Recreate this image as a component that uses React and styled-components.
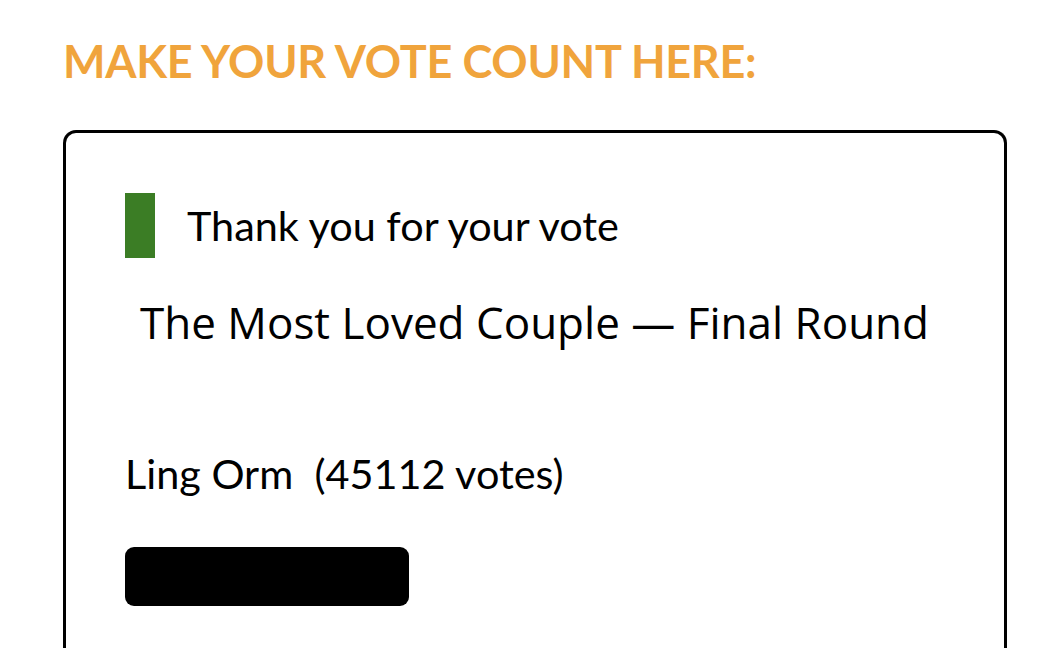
import React from "react";
import styled, { createGlobalStyle } from "styled-components";

const Global = createGlobalStyle`
  html, body {
    margin: 0;
    padding: 0;
    background: #ffffff;
    overflow: hidden;
  }
  body {
    font-family: Lato, "Liberation Sans", sans-serif;
  }
`;

const Page = styled.div`
  width: 1059px;
  height: 648px;
  padding: 34px 52px 0 63px;
  box-sizing: border-box;
  overflow: hidden;
`;

const Heading = styled.h2`
  margin: 0 0 42px 0;
  font-family: Lato, sans-serif;
  font-weight: 700;
  font-size: 45px;
  line-height: 54px;
  color: #f0a43c;
  letter-spacing: -0.3px;
`;

const Card = styled.div`
  border: 3px solid #000;
  border-bottom: none;
  border-radius: 13px 13px 0 0;
  height: 600px;
  padding: 60px 0 0 59px;
  box-sizing: border-box;
`;

const Notice = styled.div`
  display: flex;
  align-items: center;
  gap: 32px;
`;

const NoticeBar = styled.div`
  width: 30px;
  height: 65px;
  background: #3b7d25;
`;

const NoticeText = styled.span`
  font-family: Lato, sans-serif;
  font-size: 41.4px;
  line-height: 49px;
  color: #000;
`;

const PollTitle = styled.div`
  margin: 34px 0 0 15px;
  font-family: "Open Sans", sans-serif;
  font-size: 44px;
  line-height: 60px;
  color: #000;
`;

const Option = styled.div`
  margin-top: 97px;
`;

const OptionLabel = styled.div`
  font-family: Lato, sans-serif;
  font-size: 41.4px;
  line-height: 48px;
  color: #000;
  white-space: pre;
`;

const Bar = styled.div`
  margin-top: 50px;
  height: 59px;
  background: #000;
  border-radius: 9px;
`;

const options = [{ name: "Ling Orm", votes: 45112, width: 284 }];

export default function App() {
  return (
    <Page>
      <Global />
      <Heading>MAKE YOUR VOTE COUNT HERE:</Heading>
      <Card>
        <Notice>
          <NoticeBar />
          <NoticeText>Thank you for your vote</NoticeText>
        </Notice>
        <PollTitle>The Most Loved Couple — Final Round</PollTitle>
        {options.map((o) => (
          <Option key={o.name}>
            <OptionLabel>{`${o.name}  (${o.votes} votes)`}</OptionLabel>
            <Bar style={{ width: o.width }} />
          </Option>
        ))}
      </Card>
    </Page>
  );
}
